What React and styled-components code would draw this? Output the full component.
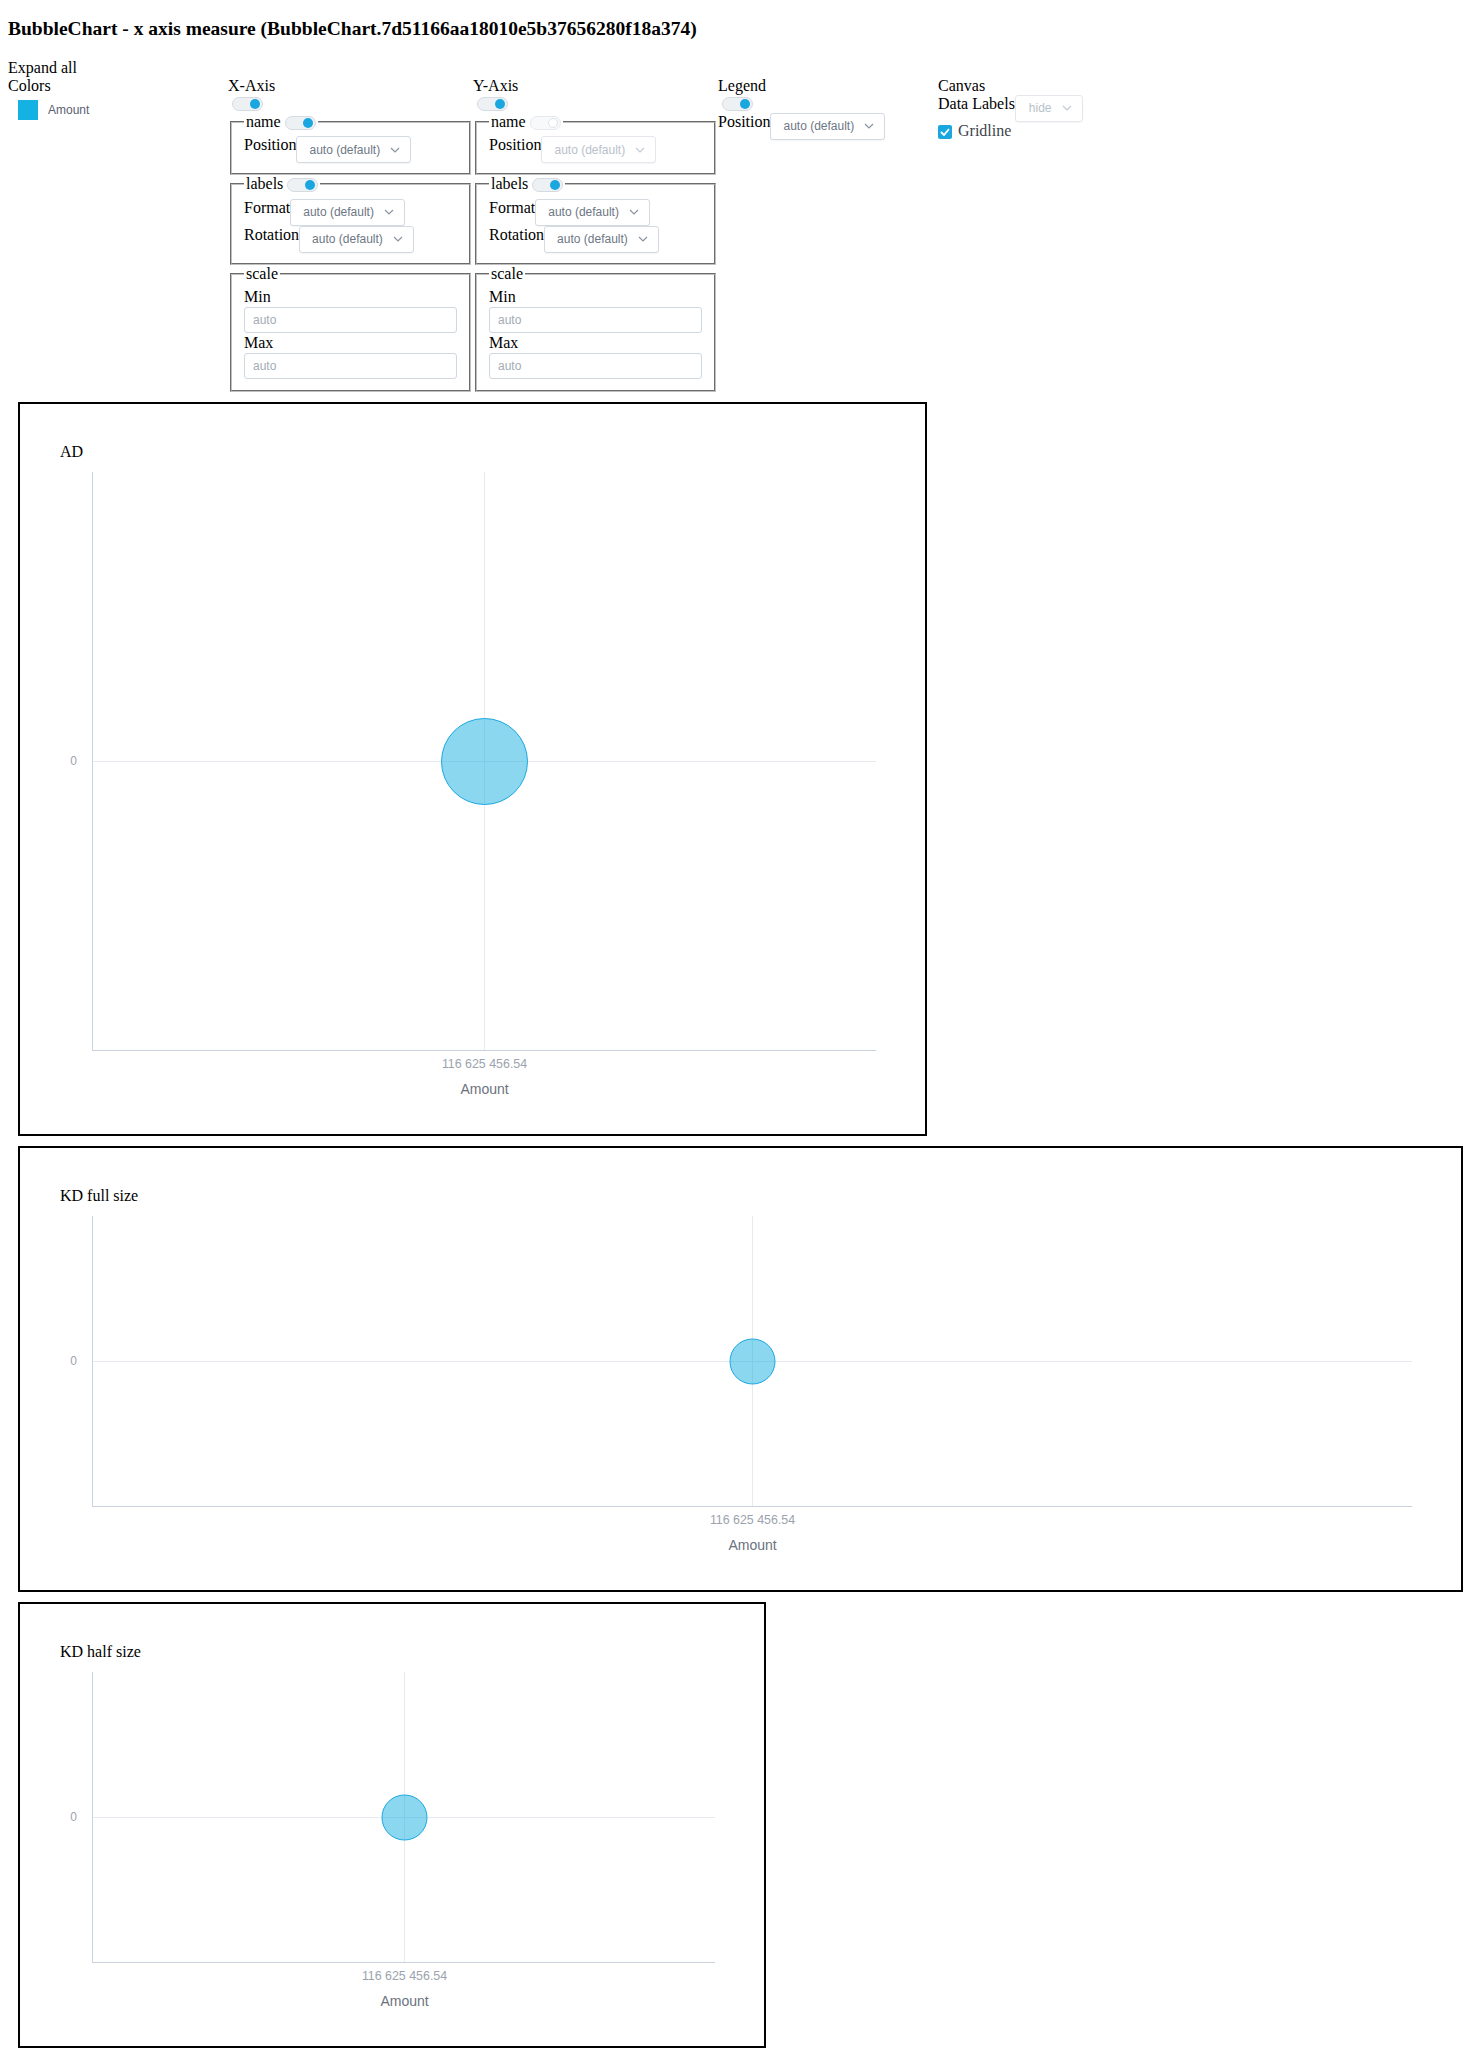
import React from "react";
import styled, { createGlobalStyle } from "styled-components";

const GlobalStyle = createGlobalStyle`
  body {
    margin: 0;
    font-family: "Liberation Serif", "Times New Roman", serif;
    font-size: 16px;
    color: #000;
    background: #fff;
  }
`;

const Page = styled.div`
  display: flow-root;
  padding: 8px;
`;

const Title = styled.h3`
  margin: 10px 0 18.6px;
  font-size: 19.5px;
  font-weight: bold;
`;

const Controls = styled.div`
  display: flex;
  align-items: flex-start;
`;

const Column = styled.div`
  flex: none;
  width: ${(p) => p.$width}px;
`;

const Toggle = styled.span`
  display: ${(p) => (p.$block ? "flex" : "inline-flex")};
  align-items: center;
  justify-content: flex-end;
  box-sizing: border-box;
  width: 31px;
  height: 14px;
  padding: 0 2px;
  border-radius: 7px;
  border: 1px solid ${(p) => (p.$on ? "#d5dbe2" : "#e6e9ed")};
  background: ${(p) => (p.$on ? "#eef1f4" : "#f8f9fa")};
  vertical-align: top;
  margin: ${(p) => (p.$block ? "2px 0 2px 4px" : "3px 0 0 4px")};

  &::after {
    content: "";
    box-sizing: border-box;
    width: 10px;
    height: 10px;
    border-radius: 50%;
    background: ${(p) => (p.$on ? "#1aa7df" : "#fff")};
    border: ${(p) => (p.$on ? "none" : "1px solid #dfe3e8")};
  }
`;

const Group = styled.fieldset`
  margin: 0 2px;
  padding: 5.6px 12px 10px;
  border: 2px groove #c0c0c0;
  min-inline-size: min-content;
`;

const GroupLegend = styled.legend`
  padding: 0 2px;
`;

const Row = styled.div`
  display: flex;
  align-items: flex-start;
`;

const SelectBox = styled.div`
  flex: none;
  display: flex;
  align-items: center;
  justify-content: space-between;
  box-sizing: border-box;
  width: ${(p) => p.$width}px;
  height: 27px;
  padding: 0 10px 0 ${(p) => p.$pad}px;
  border: 1px solid ${(p) => (p.$disabled ? "#e4e8ed" : "#d3dae2")};
  border-radius: 3px;
  background: #fff;
  box-shadow: 0 1px 1px rgba(0, 0, 0, 0.04);
  font: 12px "Liberation Sans", Arial, sans-serif;
  color: ${(p) => (p.$disabled ? "#b9c1cb" : "#6d7785")};
`;

const Chevron = ({ color }) => (
  <svg width="10" height="6" viewBox="0 0 10 6">
    <path d="M1 1l4 4 4-4" fill="none" stroke={color} strokeWidth="1.2" />
  </svg>
);

const Select = ({ value, width = 115, pad = 12, disabled }) => (
  <SelectBox $width={width} $pad={pad} $disabled={disabled}>
    <span>{value}</span>
    <Chevron color={disabled ? "#c3cad2" : "#8a94a0"} />
  </SelectBox>
);

const TextInput = styled.input`
  display: block;
  box-sizing: border-box;
  width: 100%;
  height: 26px;
  margin: 1px 0;
  padding: 0 8px;
  border: 1px solid #cfd7e0;
  border-radius: 3px;
  font: 12px "Liberation Sans", Arial, sans-serif;
  color: #333;

  &::placeholder {
    color: #a3abb5;
  }
`;

const ColorItem = styled.div`
  display: flex;
  align-items: center;
  gap: 10px;
  margin-top: 5px;
  padding-left: 10px;
`;

const Swatch = styled.span`
  width: 20px;
  height: 20px;
  background: #14b1e3;
`;

const SwatchLabel = styled.span`
  font: 12px "Liberation Sans", Arial, sans-serif;
  color: #5a6270;
`;

const CheckRow = styled.div`
  display: flex;
  align-items: center;
  gap: 6px;
  color: #3e444d;
`;

const CheckBox = styled.span`
  display: flex;
  align-items: center;
  justify-content: center;
  width: 14px;
  height: 14px;
  margin-top: 2px;
  border-radius: 2px;
  background: #1aa7df;
`;

const ChartList = styled.div`
  display: flex;
  flex-direction: column;
  align-items: flex-start;
  gap: 10px;
  margin-top: 9.5px;
  padding-left: 10px;
`;

const ChartFrame = styled.div`
  box-sizing: border-box;
  width: ${(p) => p.$width}px;
  height: ${(p) => p.$height}px;
  border: 2px solid #000;
  display: flex;
  flex-direction: column;
`;

const ChartTitle = styled.div`
  padding: 39px 40px 0;
  line-height: 18px;
`;

const Plot = styled.svg`
  display: block;
  font-family: "Liberation Sans", Arial, sans-serif;
`;

const AxisGroup = ({ name, toggleOn = true, positionDisabled }) => (
  <>
    <div>{name}</div>
    <Toggle $on $block />
    <Group>
      <GroupLegend>
        name
        <Toggle $on={toggleOn} />
      </GroupLegend>
      <Row>
        <span>Position</span>
        <Select value="auto (default)" disabled={positionDisabled} />
      </Row>
    </Group>
    <Group>
      <GroupLegend>
        labels
        <Toggle $on />
      </GroupLegend>
      <Row>
        <span>Format</span>
        <Select value="auto (default)" />
      </Row>
      <Row>
        <span>Rotation</span>
        <Select value="auto (default)" />
      </Row>
    </Group>
    <Group>
      <GroupLegend>scale</GroupLegend>
      <div>Min</div>
      <TextInput placeholder="auto" />
      <div>Max</div>
      <TextInput placeholder="auto" />
    </Group>
  </>
);

const BubbleChart = ({ title, width, height, radius }) => {
  const w = width - 4;
  const h = height - 4 - 57;
  const left = 72;
  const right = w - 49;
  const top = 11;
  const bottom = h - 84;
  const cx = Math.round((left + right) / 2) + 0.5;
  const cy = Math.round((top + bottom) / 2) + 0.5;
  return (
    <ChartFrame $width={width} $height={height}>
      <ChartTitle>{title}</ChartTitle>
      <Plot width={w} height={h}>
        <line x1={cx} y1={top} x2={cx} y2={bottom} stroke="#e6e9ee" />
        <line x1={left} y1={cy} x2={right} y2={cy} stroke="#e6e9ee" />
        <line x1={left + 0.5} y1={top} x2={left + 0.5} y2={bottom} stroke="#c9d4e2" />
        <line x1={left} y1={bottom + 0.5} x2={right} y2={bottom + 0.5} stroke="#c9d1dc" />
        <circle cx={cx} cy={cy} r={radius} fill="rgba(23,175,224,0.5)" stroke="#1ba8e0" />
        <text x={left - 15} y={cy} fontSize="12" fill="#9ba3ae" textAnchor="end" dominantBaseline="middle">
          0
        </text>
        <text x={cx} y={bottom + 15} fontSize="12.4" fill="#9ba3ae" textAnchor="middle" dominantBaseline="middle">
          116 625 456.54
        </text>
        <text x={cx} y={bottom + 40} fontSize="14" fill="#6b727e" textAnchor="middle" dominantBaseline="middle">
          Amount
        </text>
      </Plot>
    </ChartFrame>
  );
};

export default function App() {
  return (
    <Page>
      <GlobalStyle />
      <Title>BubbleChart - x axis measure (BubbleChart.7d51166aa18010e5b37656280f18a374)</Title>
      <div>Expand all</div>
      <Controls>
        <Column $width={220}>
          <div>Colors</div>
          <ColorItem>
            <Swatch />
            <SwatchLabel>Amount</SwatchLabel>
          </ColorItem>
        </Column>
        <Column $width={245}>
          <AxisGroup name="X-Axis" />
        </Column>
        <Column $width={245}>
          <AxisGroup name="Y-Axis" toggleOn={false} positionDisabled />
        </Column>
        <Column $width={220}>
          <div>Legend</div>
          <Toggle $on $block />
          <Row>
            <span>Position</span>
            <Select value="auto (default)" />
          </Row>
        </Column>
        <Column $width={200}>
          <div>Canvas</div>
          <Row>
            <span>Data Labels</span>
            <Select value="hide" width={68} pad={13} disabled />
          </Row>
          <CheckRow>
            <CheckBox>
              <svg width="10" height="8" viewBox="0 0 10 8">
                <path d="M1 4l3 3 5-6" fill="none" stroke="#fff" strokeWidth="1.8" />
              </svg>
            </CheckBox>
            <span>Gridline</span>
          </CheckRow>
        </Column>
      </Controls>
      <ChartList>
        <BubbleChart title="AD" width={909} height={734} radius={43} />
        <BubbleChart title="KD full size" width={1445} height={446} radius={22.5} />
        <BubbleChart title="KD half size" width={748} height={446} radius={22.5} />
      </ChartList>
    </Page>
  );
}
